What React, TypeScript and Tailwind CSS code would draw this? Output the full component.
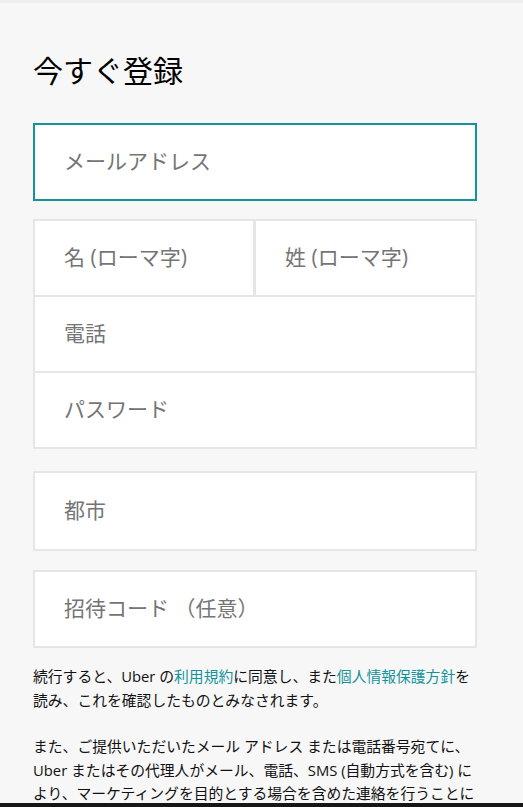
import React from "react";

const font = { fontFamily: '"Open Sans", "Noto Sans CJK JP", sans-serif' };

function Field({ label, className = "" }: { label: string; className?: string }) {
  return (
    <div className={`flex items-center bg-white pl-[29px] text-[21px] text-[#757575] ${className}`}>
      {label}
    </div>
  );
}

export default function App() {
  return (
    <div className="min-h-screen bg-[#f7f7f7]" style={font}>
      <div className="h-[3px] bg-[#eeeeee]" />
      <div className="pl-[33px] pr-[46px] pt-[50px] pb-[40px]">
        <h1 className="text-[30px] leading-[36px] text-black">今すぐ登録</h1>
        <div className="mt-[34px] flex h-[78px] items-center border-2 border-[#14939b] bg-white pl-[29px] text-[21px] text-[#757575]">
          メールアドレス
        </div>
        <div className="mt-[18px] border-2 border-[#e6e6e6] bg-white">
          <div className="flex h-[74px]">
            <Field label="名 (ローマ字)" className="w-[221px] border-r-[3px] border-[#e6e6e6] pl-[28px]" />
            <Field label="姓 (ローマ字)" className="flex-1 pl-[27px]" />
          </div>
          <Field label="電話" className="h-[76px] border-t-2 border-[#e6e6e6]" />
          <Field label="パスワード" className="h-[76px] border-t-2 border-[#e6e6e6]" />
        </div>
        <Field label="都市" className="mt-[22px] h-[80px] border-2 border-[#e6e6e6]" />
        <Field label="招待コード （任意）" className="mt-[19px] h-[78px] border-2 border-[#e6e6e6]" />
        <div className="mt-[17px] text-[14.8px] leading-[23.5px] text-[#111]">
          <p>
            続行すると、Uber の<span className="text-[#14939b]">利用規約</span>に同意し、また
            <span className="text-[#14939b]">個人情報保護方針</span>を<br />
            読み、これを確認したものとみなされます。
          </p>
          <p className="mt-[23px]">
            また、ご提供いただいたメール アドレス または電話番号宛てに、<br />
            Uber またはその代理人がメール、電話、SMS (自動方式を含む) に<br />
            より、マーケティングを目的とする場合を含めた連絡を行うことに<br />
            同意したものとみなされます。
          </p>
        </div>
      </div>
      <div className="fixed bottom-0 left-0 right-0 h-[4px] bg-[#161616]" />
    </div>
  );
}
